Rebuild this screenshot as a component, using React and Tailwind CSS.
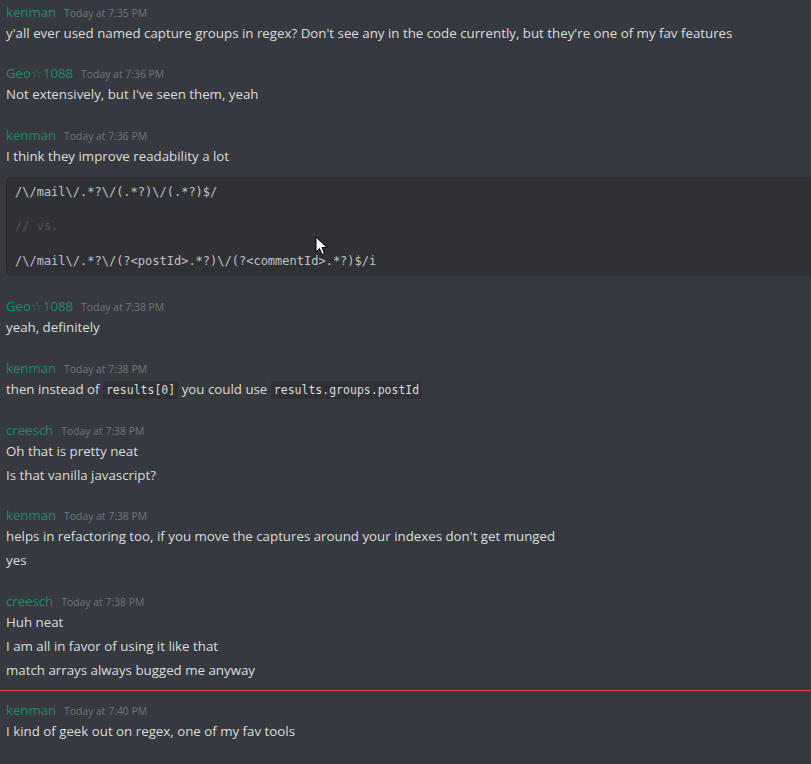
const groups = [
  { name: "kenman", time: "Today at 7:35 PM", lines: ["y'all ever used named capture groups in regex? Don't see any in the code currently, but they're one of my fav features"] },
  { name: "Geo☆1088", time: "Today at 7:36 PM", lines: ["Not extensively, but I've seen them, yeah"] },
  { name: "kenman", time: "Today at 7:36 PM", lines: ["I think they improve readability a lot"], code: true },
  { name: "Geo☆1088", time: "Today at 7:38 PM", lines: ["yeah, definitely"] },
  { name: "kenman", time: "Today at 7:38 PM", lines: ["inline"] },
  { name: "creesch", time: "Today at 7:38 PM", lines: ["Oh that is pretty neat", "Is that vanilla javascript?"] },
  { name: "kenman", time: "Today at 7:38 PM", lines: ["helps in refactoring too, if you move the captures around your indexes don't get munged", "yes"] },
  { name: "creesch", time: "Today at 7:38 PM", lines: ["Huh neat", "I am all in favor of using it like that", "match arrays always bugged me anyway"] },
  { name: "kenman", time: "Today at 7:40 PM", lines: ["I kind of geek out on regex, one of my fav tools"], divider: true },
];

const mono = { fontFamily: '"DejaVu Sans Mono", "Liberation Mono", monospace' };

function Inline({ children }) {
  return (
    <code className="rounded-[3px] bg-[#2f3136] px-[3px] py-[2px] text-[11.5px] leading-[16px] text-[#dcddde]" style={mono}>
      {children}
    </code>
  );
}

function CodeBlock() {
  return (
    <div className="pt-[9px] pb-[1px]">
      <div className="w-[820px] rounded-[5px] border border-[#282b30] bg-[#2f3136] px-[8px] py-[5.5px] text-[12px] leading-[17.25px] text-[#c0c2c5]" style={mono}>
        <div>/\/mail\/.*?\/(.*?)\/(.*?)$/</div>
        <div>&nbsp;</div>
        <div className="text-[#4f545c]">// vs.</div>
        <div>&nbsp;</div>
        <div>/\/mail\/.*?\/(?&lt;postId&gt;.*?)\/(?&lt;commentId&gt;.*?)$/i</div>
      </div>
    </div>
  );
}

function Group({ g }) {
  return (
    <div className="px-[6px]">
      <div className="flex h-[17px] items-baseline gap-[8px] leading-[17px]">
        <span className="text-[13.2px] text-[#1f8b6d]">{g.name}</span>
        <span className="text-[10.4px] text-[#72767d]">{g.time}</span>
      </div>
      {g.lines.map((l, i) => (
        <div key={i} className="h-[24px] text-[13.3px] leading-[24px] text-[#dcddde]">
          {l === "inline" ? (
            <>
              then instead of <Inline>results[0]</Inline> you could use <Inline>results.groups.postId</Inline>
            </>
          ) : (
            l
          )}
        </div>
      ))}
      {g.code && <CodeBlock />}
    </div>
  );
}

export default function App() {
  return (
    <div className="relative h-[764px] w-[811px] overflow-hidden bg-[#36393f]" style={{ fontFamily: '"Open Sans", "Noto Sans", sans-serif' }}>
      <div className="pt-[3.5px]">
        {groups.map((g, i) => (
          <div key={i} className={i === 0 || g.divider ? "" : "mt-[20.75px]"}>
            {g.divider && <div className="mt-[7.5px] mb-[11.5px] h-[1px] bg-[#f04747]" />}
            <Group g={g} />
          </div>
        ))}
      </div>
      <svg className="absolute left-[315px] top-[236px]" width="13" height="20" viewBox="0 0 13 20">
        <path d="M1 1 L1 16 L4.5 12.5 L7 18.5 L9.5 17.5 L7 11.5 L12 11.5 Z" fill="#fff" stroke="#000" strokeWidth="1" />
      </svg>
    </div>
  );
}
